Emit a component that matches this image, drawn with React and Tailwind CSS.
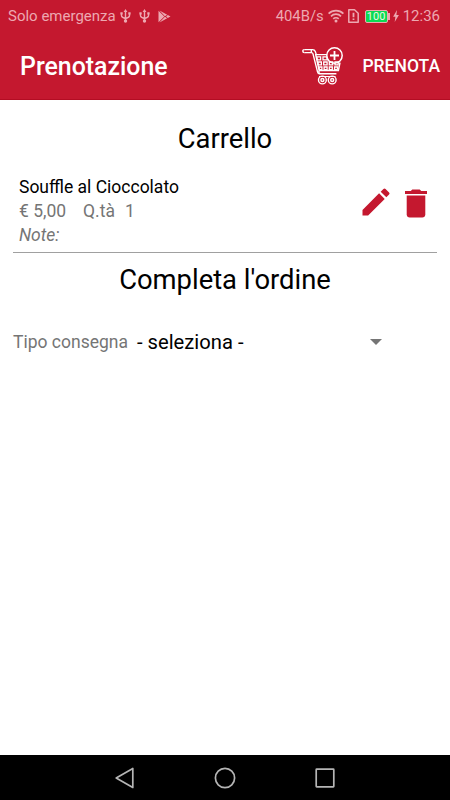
import { MdEdit } from "react-icons/md";

function UsbIcon() {
  return (
    <svg className="h-[14px] w-[11px]" viewBox="0 0 11 14" fill="none" stroke="currentColor" strokeWidth="1.400">
      <path d="M5.500 2v10M1.500 4.500v2.200c0 1.400 1.500 2 4 2.800 2.500-.8 4-1.400 4-2.800V4.500" />
      <path d="M5.500 0 3.600 3h3.800zM.4 3.300h2.300v2.300H.4zM8.300 3.300h2.300v2.300H8.300z" fill="currentColor" stroke="none" />
      <circle cx="5.500" cy="12" r="1.700" fill="currentColor" stroke="none" />
    </svg>
  );
}

function PlayIcon() {
  return (
    <svg className="h-[13px] w-[13px]" viewBox="0 0 13 13" fill="currentColor">
      <path d="M.5 .8 6.300 6.500.5 12.200zM1.500.5l7.700 4.200-2.300 1.600zM1.500 12.500l7.700-4.200-2.300-1.600zM9.800 5.100l2.700 1.400-2.700 1.400-1.700-1.400z" />
    </svg>
  );
}

function WifiIcon() {
  return (
    <svg className="h-[14px] w-[16px]" viewBox="0 0 16 14" fill="none" stroke="currentColor" strokeWidth="1.700">
      <path d="M.6 4.600a10.500 10.500 0 0 1 14.800 0M3 7.300a7 7 0 0 1 10 0M5.300 9.900a3.800 3.800 0 0 1 5.400 0" />
      <circle cx="8" cy="12" r="1.500" fill="currentColor" stroke="none" />
    </svg>
  );
}

function SimIcon() {
  return (
    <svg className="h-[14px] w-[11px]" viewBox="0 0 11 14" fill="none" stroke="currentColor" strokeWidth="1.500">
      <path d="M.8.8h5.700l3.700 3.400v9H.8z" strokeLinejoin="round" />
      <path d="M5.500 3.800v4.400M5.500 9.500v1.500" strokeWidth="1.800" />
    </svg>
  );
}

function BoltIcon() {
  return (
    <svg className="h-[12px] w-[6px]" viewBox="0 0 6 12" fill="currentColor">
      <path d="M4 0 .1 6.800h2.300L1.700 12l4.200-7H3.400z" />
    </svg>
  );
}

function CartPlusIcon() {
  return (
    <svg className="h-[38px] w-[42px]" viewBox="0 0 42 38" fill="none" stroke="currentColor" strokeWidth="1.400">
      {/* handle */}
      <path d="M2.300 2.600h8.200c1.600 0 2.300.6 2.800 2l1 3M2.300 5.600h7.200c.9 0 1.200.4 1.500 1.300l4.600 18.200c.3 1.200.9 1.700 2 1.700h16.800" />
      <path d="M2.300 2.600a1.500 1.500 0 0 0 0 3M9.300 2.600v3" />
      {/* basket */}
      <path d="M13 7.600h12M13.800 8l3.300 15.300M38 15.500l-1.600 8H18.100c-1.800 0-1.800 3 0 3" />
      <path d="M14.800 9.800h3.800v3h-3.200zM21 9.800h3.600l.8 3H21zM15.800 15h3.600v2.900h-3zM21.700 15h3.400v2.900h-3.400zM27.300 15h3.400v2.900h-3.400zM33 15h3.500l-.5 2.900h-3zM16.900 20h3v2.600h-2.500zM22.100 20h3v2.600h-3zM27.300 20h3v2.600h-3zM32.600 20h3l-.4 2.600h-2.600z" strokeWidth="1.300" />
      {/* wheels */}
      <circle cx="20.400" cy="33" r="3.900" />
      <circle cx="20.400" cy="33" r="1.500" />
      <circle cx="30.200" cy="33" r="3.900" />
      <circle cx="30.200" cy="33" r="1.500" />
      <path d="M17 29.500h16.500" strokeWidth="1" />
      {/* plus badge */}
      <circle cx="32.500" cy="8.500" r="7.700" strokeWidth="1.500" />
      <path d="M32.500 4v9M28 8.500h9" strokeWidth="1.800" />
    </svg>
  );
}

function TrashIcon() {
  return (
    <svg className="h-[29px] w-[22px]" viewBox="0 0 22 29" fill="currentColor">
      <path d="M0 2h5.800L7.300.4h7.400L16.200 2H22v3H0z" />
      <path d="M1.700 6.400h18.600v19.200c0 1.700-1.300 3-3 3H4.700c-1.700 0-3-1.300-3-3z" />
    </svg>
  );
}

function StatusBar() {
  return (
    <div className="flex h-8 items-center pl-2 pr-[10px] text-[15px] text-[#eda8b1]">
      <span className="w-[112px] whitespace-nowrap">Solo emergenza</span>
      <div className="flex items-center gap-[8px]">
        <UsbIcon />
        <UsbIcon />
        <PlayIcon />
      </div>
      <div className="ml-auto flex items-center">
        <span className="text-[14.800px]">404B/s</span>
        <span className="ml-1"><WifiIcon /></span>
        <span className="ml-1"><SimIcon /></span>
        <span className="ml-[6px] flex h-[13px] w-[23px] items-center justify-center rounded-[2px] border border-[#eda8b1] bg-[#0bdb52] text-[11px] leading-none text-[#e9f8e6]">
          100
        </span>
        <span className="h-[7px] w-[2px] bg-[#eda8b1]" />
        <span className="ml-[3px]"><BoltIcon /></span>
        <span className="ml-[4px]">12:36</span>
      </div>
    </div>
  );
}

function Header() {
  return (
    <header className="flex h-[67px] items-center pl-5 pr-[10px] text-white">
      <h1 className="pt-[3px] text-[24.900px] font-medium">Prenotazione</h1>
      <button className="ml-auto mr-[18px]">
        <CartPlusIcon />
      </button>
      <button className="pt-[2px] text-[17.500px] font-medium">PRENOTA</button>
    </header>
  );
}

function CartItem({ name, price, quantity }) {
  return (
    <div className="flex h-[80px] border-b border-[#a0a0a0] pl-[6px] pr-[10px]">
      <div className="pt-[2px] text-[17.500px] leading-[24px] text-[#757575]">
        <p className="text-black">{name}</p>
        <p className="flex">
          <span className="w-[64px]">€ {price}</span>
          <span className="w-[42px]">Q.tà</span>
          <span>{quantity}</span>
        </p>
        <p className="italic">Note:</p>
      </div>
      <div className="ml-auto flex gap-[11px] text-[#c4182f]">
        <MdEdit className="mt-[11px] size-[36px]" />
        <span className="pt-[16px]"><TrashIcon /></span>
      </div>
    </div>
  );
}

function NavBar() {
  return (
    <nav className="flex h-[45px] items-center justify-center gap-[78px] bg-black text-[#b5b5b5]">
      <svg className="size-[22px]" viewBox="0 0 22 22" fill="none" stroke="currentColor" strokeWidth="1.700">
        <path d="M18.800 1.500v19L2.200 11z" strokeLinejoin="round" />
      </svg>
      <svg className="size-[22px]" viewBox="0 0 22 22" fill="none" stroke="currentColor" strokeWidth="1.700">
        <circle cx="11" cy="11" r="9.600" />
      </svg>
      <svg className="size-[22px]" viewBox="0 0 22 22" fill="none" stroke="currentColor" strokeWidth="1.700">
        <rect x="2.200" y="2.200" width="17.600" height="17.600" rx="0.500" />
      </svg>
    </nav>
  );
}

export default function App() {
  return (
    <div className="flex h-[800px] w-[450px] flex-col bg-white font-['Roboto',sans-serif]">
      <div className="border-b border-[#b30d23] bg-[#c4182f]">
        <StatusBar />
        <Header />
      </div>

      <main className="flex-1 px-[13px]">
        <h2 className="pt-[21px] text-center text-[27.400px] leading-9">Carrello</h2>
        <div className="pt-[16px]">
          <CartItem name="Souffle al Cioccolato" price="5,00" quantity={1} />
        </div>

        <h2 className="pt-[9px] text-center text-[27.400px] leading-9">Completa l'ordine</h2>
        <div className="flex items-center pt-[29px]">
          <span className="w-[124px] text-[17.500px] text-[#757575]">Tipo consegna</span>
          <button className="flex flex-1 items-center justify-between pr-[55px] text-[20.200px]">
            - seleziona -
            <svg className="h-[6px] w-[12px]" viewBox="0 0 12 6" fill="#757575">
              <path d="M0 0h12L6 6z" />
            </svg>
          </button>
        </div>
      </main>

      <NavBar />
    </div>
  );
}
